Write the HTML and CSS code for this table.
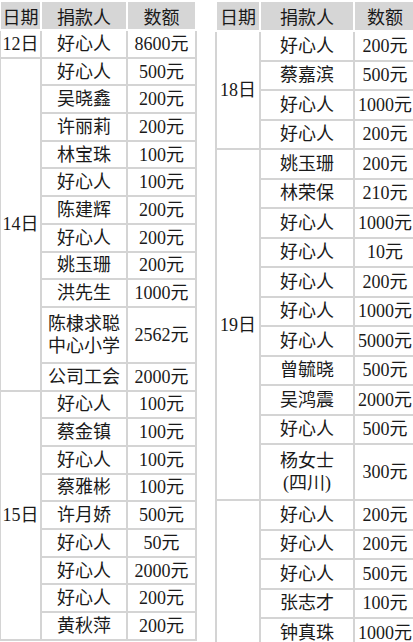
FILE: index.html
```html
<!DOCTYPE html>
<html lang="zh-CN">
<head>
<meta charset="utf-8">
<title>捐款名单</title>
<link rel="stylesheet" href="styles.css">
</head>
<body>
<div class="page">
  <table class="list list-left">
    <colgroup><col class="c-date"><col class="c-name"><col class="c-amt"></colgroup>
    <thead>
      <tr><th>日期</th><th>捐款人</th><th>数额</th></tr>
    </thead>
    <tbody>
      <tr><td>12日</td><td>好心人</td><td>8600元</td></tr>
      <tr><td rowspan="11">14日</td><td>好心人</td><td>500元</td></tr>
      <tr><td>吴晓鑫</td><td>200元</td></tr>
      <tr><td>许丽莉</td><td>200元</td></tr>
      <tr><td>林宝珠</td><td>100元</td></tr>
      <tr><td>好心人</td><td>100元</td></tr>
      <tr><td>陈建辉</td><td>200元</td></tr>
      <tr><td>好心人</td><td>200元</td></tr>
      <tr><td>姚玉珊</td><td>200元</td></tr>
      <tr><td>洪先生</td><td>1000元</td></tr>
      <tr class="tall"><td>陈棣求聪<br>中心小学</td><td>2562元</td></tr>
      <tr><td>公司工会</td><td>2000元</td></tr>
      <tr><td rowspan="9">15日</td><td>好心人</td><td>100元</td></tr>
      <tr><td>蔡金镇</td><td>100元</td></tr>
      <tr><td>好心人</td><td>100元</td></tr>
      <tr><td>蔡雅彬</td><td>100元</td></tr>
      <tr><td>许月娇</td><td>500元</td></tr>
      <tr><td>好心人</td><td>50元</td></tr>
      <tr><td>好心人</td><td>2000元</td></tr>
      <tr><td>好心人</td><td>200元</td></tr>
      <tr><td>黄秋萍</td><td>200元</td></tr>
    </tbody>
  </table>

  <table class="list list-right">
    <colgroup><col class="c-date"><col class="c-name"><col class="c-amt"></colgroup>
    <thead>
      <tr><th>日期</th><th>捐款人</th><th>数额</th></tr>
    </thead>
    <tbody>
      <tr><td rowspan="4">18日</td><td>好心人</td><td>200元</td></tr>
      <tr><td>蔡嘉滨</td><td>500元</td></tr>
      <tr><td>好心人</td><td>1000元</td></tr>
      <tr><td>好心人</td><td>200元</td></tr>
      <tr><td rowspan="11">19日</td><td>姚玉珊</td><td>200元</td></tr>
      <tr><td>林荣保</td><td>210元</td></tr>
      <tr><td>好心人</td><td>1000元</td></tr>
      <tr><td>好心人</td><td>10元</td></tr>
      <tr><td>好心人</td><td>200元</td></tr>
      <tr><td>好心人</td><td>1000元</td></tr>
      <tr><td>好心人</td><td>5000元</td></tr>
      <tr><td>曾毓晓</td><td>500元</td></tr>
      <tr><td>吴鸿震</td><td>2000元</td></tr>
      <tr><td>好心人</td><td>500元</td></tr>
      <tr class="tall"><td>杨女士<br>(四川)</td><td>300元</td></tr>
      <tr><td rowspan="5"></td><td>好心人</td><td>200元</td></tr>
      <tr><td>好心人</td><td>200元</td></tr>
      <tr><td>好心人</td><td>500元</td></tr>
      <tr><td>张志才</td><td>100元</td></tr>
      <tr><td>钟真珠</td><td>1000元</td></tr>
    </tbody>
  </table>
</div>
</body>
</html>
```

FILE: styles.css
```css
html, body {
  margin: 0;
  padding: 0;
  background: #ffffff;
}

.page {
  display: flex;
  align-items: flex-start;
  gap: 18px;
  height: 642px;
  overflow: hidden;
  margin-left: -1px;
}

.list {
  border-collapse: collapse;
  table-layout: fixed;
  font-family: "Liberation Serif", "Noto Sans CJK SC", serif;
  font-size: 18px;
  color: #1a1a1a;
  text-align: center;
}

.list th,
.list td {
  border: 2px solid #d4d4d4;
  padding: 0;
  vertical-align: middle;
  line-height: 22px;
  white-space: nowrap;
}

.list th {
  background: #d6d6d6;
  border-color: #ffffff;
  font-weight: normal;
  font-family: "Noto Sans CJK SC", sans-serif;
  line-height: 20px;
}

.list-left {
  width: 196px;
}
.list-left .c-date { width: 41px; }
.list-left .c-name { width: 86px; }
.list-left .c-amt { width: 69px; }
.list-left thead tr { height: 29px; }
.list-left tbody tr { height: 27.7px; }
.list-left tbody tr.tall { height: 56px; }

.list-right {
  width: 200px;
}
.list-right .c-date { width: 44px; }
.list-right .c-name { width: 94px; }
.list-right .c-amt { width: 62px; }
.list-right thead tr { height: 30px; }
.list-right tbody tr { height: 29.5px; }
.list-right tbody tr.tall { height: 56px; }
```
